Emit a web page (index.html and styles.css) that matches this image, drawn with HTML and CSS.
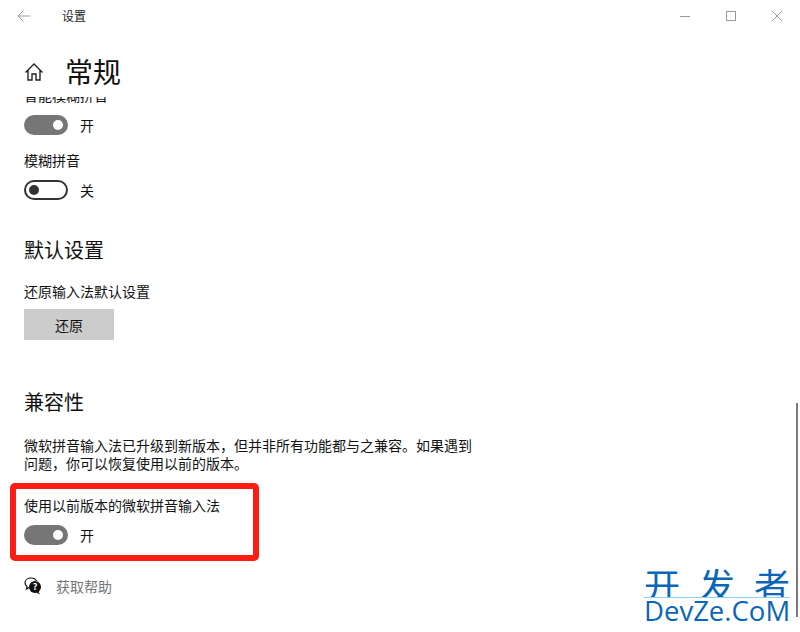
FILE: index.html
```html
<!DOCTYPE html>
<html lang="zh-CN">
<head>
    <meta charset="UTF-8">
    <title>设置</title>
    <link rel="stylesheet" href="styles.css">
</head>
<body>
    <div class="window">
        <div class="titlebar">
            <svg class="back-icon" width="14" height="14" viewBox="0 0 14 14"><path d="M6.500 1.500 1 7l5.500 5.500M1 7H13" fill="none" stroke="#9a9a9a" stroke-width="1"/></svg>
            <span class="window-title">设置</span>
            <div class="window-controls">
                <svg width="12" height="12" viewBox="0 0 12 12"><path d="M1 6.500H11" stroke="#999" stroke-width="1"/></svg>
                <svg width="12" height="12" viewBox="0 0 12 12"><rect x="1.500" y="1.500" width="9" height="9" fill="none" stroke="#999" stroke-width="1"/></svg>
                <svg width="12" height="12" viewBox="0 0 12 12"><path d="M1 1 11 11M11 1 1 11" stroke="#999" stroke-width="1"/></svg>
            </div>
        </div>

        <div class="page-header">
            <svg class="home-icon" width="20" height="20" viewBox="0 0 20 20"><path d="M1.500 10.500 10 2l8.500 8.500M4 8.500V18h4v-6h4v6h4V8.500" fill="none" stroke="#222" stroke-width="1.400"/></svg>
            <h1>常规</h1>
        </div>

        <div class="content">
            <div class="setting first-setting">
                <div class="label">智能模糊拼音</div>
                <div class="toggle-row">
                    <span class="toggle on"></span>
                    <span>开</span>
                </div>
            </div>
            <div class="setting">
                <div class="label">模糊拼音</div>
                <div class="toggle-row">
                    <span class="toggle off"></span>
                    <span>关</span>
                </div>
            </div>

            <h2 class="defaults-title">默认设置</h2>
            <div class="label reset-label">还原输入法默认设置</div>
            <button class="reset-btn">还原</button>

            <h2 class="compat-title">兼容性</h2>
            <p class="desc">微软拼音输入法已升级到新版本，但并非所有功能都与之兼容。如果遇到问题，你可以恢复使用以前的版本。</p>
            <div class="setting old-version">
                <div class="label">使用以前版本的微软拼音输入法</div>
                <div class="toggle-row">
                    <span class="toggle on"></span>
                    <span>开</span>
                </div>
            </div>

            <div class="help">
                <svg width="18" height="18" viewBox="0 0 18 18">
                    <path d="M7 1C3.600 1 1 3 1 5.800c0 1.500.8 2.800 2 3.600L2.500 12l3-1.800" fill="#fff" stroke="#111" stroke-width="1.200"/>
                    <path d="M7 1c2.500 0 4.700 1.200 5.500 3" fill="none" stroke="#111" stroke-width="1.200"/>
                    <circle cx="11" cy="10" r="6" fill="#111"/>
                    <path d="M14 14.500 16.500 17.500 12 15.500Z" fill="#111"/>
                    <text x="11" y="13" class="help-mark">?</text>
                </svg>
                <span>获取帮助</span>
            </div>
        </div>

        <!-- annotation and watermark sit on top of the screenshot -->
        <div class="red-box"></div>
        <div class="scrollbar"></div>
        <div class="watermark">
            <div class="wm-cn"><span>开</span><span>发</span><span>者</span></div>
            <div class="wm-en">DevZe.CoM</div>
        </div>
    </div>
</body>
</html>
```

FILE: styles.css
```css
* {
    box-sizing: border-box;
}
html, body {
    margin: 0;
    padding: 0;
    height: 100%;
}
body {
    font-family: "Noto Sans CJK SC", "Liberation Sans", sans-serif;
    font-size: 14px;
    color: #111;
    background: #fff;
}
.window {
    position: relative;
    width: 800px;
    height: 632px;
    display: flex;
    flex-direction: column;
    overflow: hidden;
}

/* Title bar */
.titlebar {
    height: 32px;
    flex: none;
    display: flex;
    align-items: center;
    padding-left: 17px;
}
.window-title {
    margin-left: 31px;
    font-size: 12px;
    line-height: 16px;
    margin-bottom: 1px;
    color: #222;
}
.window-controls {
    margin-left: auto;
    display: flex;
    gap: 34px;
    padding-right: 17px;
}
.window-controls svg {
    display: block;
}

/* Page header */
.page-header {
    height: 65px;
    flex: none;
    display: flex;
    align-items: center;
    padding-left: 24px;
    padding-top: 14px;
}
.home-icon {
    margin-right: 21px;
}
h1 {
    margin: 0 0 2px;
    font-size: 28px;
    font-weight: 400;
    line-height: 40px;
}

/* Scrolled content */
.content {
    flex: 1;
    overflow: hidden;
    padding-left: 24px;
}
.label {
    line-height: 18px;
    height: 20px;
}
.first-setting {
    margin-top: -11px;
}
.setting + .setting {
    margin-top: 16px;
}
.toggle-row {
    display: flex;
    align-items: center;
    gap: 12px;
    height: 20px;
    margin-top: 9px;
}
.toggle {
    position: relative;
    width: 44px;
    height: 20px;
    border-radius: 10px;
    flex: none;
}
.toggle::after {
    content: "";
    position: absolute;
    top: 5px;
    width: 10px;
    height: 10px;
    border-radius: 50%;
}
.toggle.on {
    background: #767676;
}
.toggle.on::after {
    right: 5px;
    background: #fff;
}
.toggle.off {
    border: 2px solid #333;
}
.toggle.off::after {
    top: 3px;
    left: 3px;
    background: #333;
}
h2 {
    margin: 0;
    font-size: 20px;
    font-weight: 400;
    line-height: 26px;
}
.defaults-title {
    margin-top: 37px;
}
.reset-label {
    margin-top: 19px;
}
.reset-btn {
    display: block;
    width: 90px;
    height: 31px;
    margin-top: 7px;
    border: none;
    background: #ccc;
    color: #111;
    font: inherit;
    padding: 0;
}
.compat-title {
    margin-top: 49px;
}
.desc {
    width: 452px;
    margin: 21px 0 0;
    line-height: 18px;
}
.old-version {
    margin-top: 24px;
}
.help {
    display: flex;
    align-items: center;
    gap: 14px;
    margin-top: 31px;
    color: #767676;
}
.help svg {
    display: block;
}
.help-mark {
    font-size: 9px;
    font-weight: 700;
    fill: #fff;
    text-anchor: middle;
}

/* Overlays */
.red-box {
    position: absolute;
    left: 10px;
    top: 483px;
    width: 249px;
    height: 78px;
    border: 6px solid #fb1d13;
    border-radius: 5px;
}
.scrollbar {
    position: absolute;
    left: 796px;
    top: 403px;
    width: 2px;
    height: 214px;
    background: #7a7a7a;
}
.watermark {
    position: absolute;
    left: 644px;
    top: 566px;
    width: 146px;
    color: #0a66b8;
}
.wm-cn {
    display: flex;
    justify-content: space-between;
    height: 32px;
    font-size: 36px;
    line-height: 36px;
    border-bottom: 1px solid #8fd0ee;
    overflow: hidden;
}
.wm-en {
    font-family: "Open Sans", "Liberation Sans", sans-serif;
    font-size: 27.500px;
    line-height: 26px;
    white-space: nowrap;
}
```
